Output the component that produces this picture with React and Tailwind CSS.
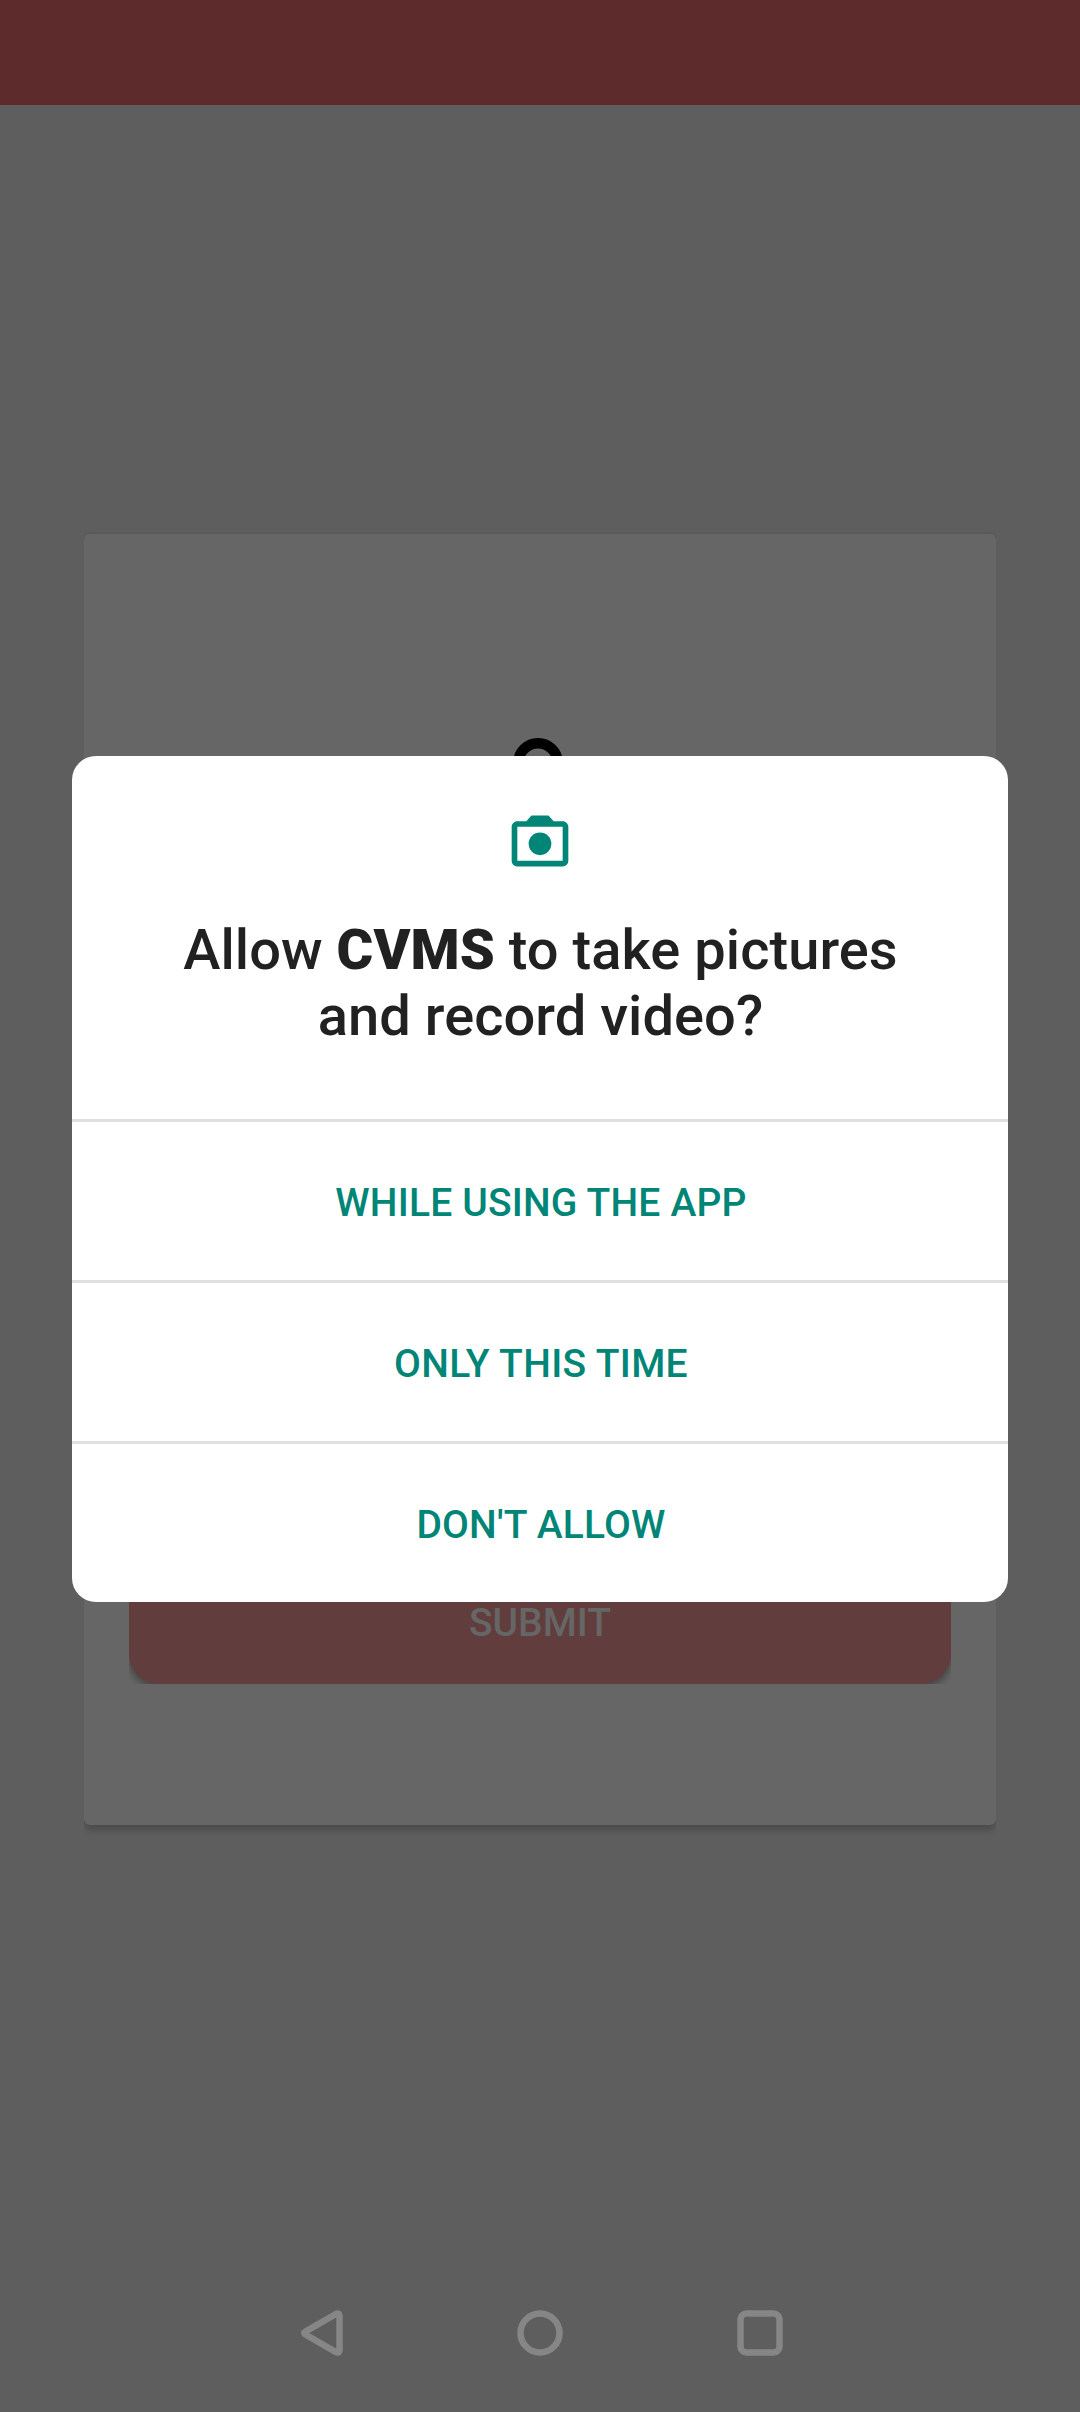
const choices = [
  { label: 'WHILE USING THE APP', tracking: 'tracking-[0.18px]' },
  { label: 'ONLY THIS TIME', tracking: 'tracking-[0.34px]' },
  { label: "DON'T ALLOW", tracking: 'tracking-[0.2px]' },
];

function CameraIcon() {
  return (
    <svg className="block size-[68px] shrink-0" viewBox="0 0 24 24" fill="#008577">
      <path fillRule="evenodd" d="M20 5h-3.17L15 3H9L7.17 5H4c-1.1 0-2 .9-2 2v12c0 1.1.9 2 2 2h16c1.1 0 2-.9 2-2V7c0-1.1-.9-2-2-2zm0 14H4V7h16z" />
      <circle cx="12" cy="13" r="4" />
    </svg>
  );
}

function LoginCard() {
  return (
    <div className="mx-[84px] mt-[429px] flex h-[1291px] flex-col items-center rounded-[6px] bg-[#666666] px-[45px] pb-[141px] pt-[204px] shadow-[0_4px_8px_rgba(0,0,0,0.25)] [clip-path:inset(-2px_0_-12px_0)]">
      <svg className="-ml-[4px] block size-[50px]" viewBox="0 0 50 50" fill="none" stroke="#000" strokeWidth="10.5">
        <circle cx="25" cy="25" r="19.75" />
      </svg>
      <div className="mt-auto flex h-[144px] w-full overflow-hidden">
        <button className="h-[144px] w-full rounded-[30px] bg-[#613d3d] pt-[23px] text-[39px] font-medium leading-none text-[#666666] shadow-[0_4px_8px_rgba(0,0,0,0.35)]">
          SUBMIT
        </button>
      </div>
    </div>
  );
}

function NavigationBar() {
  return (
    <div className="mt-auto flex h-[126px] items-start justify-center pt-[17px]">
      <svg className="block h-[60px] w-[480px] overflow-visible" viewBox="0 0 480 60" fill="none" stroke="#868686" strokeWidth="6.5" strokeLinejoin="round">
        <path d="M35.500 11.200Q39.500 9 39.500 13.500V46.500Q39.500 51 35.500 48.800L5.800 31.700Q2.800 30 5.800 28.300Z" />
        <circle cx="240" cy="30" r="19.5" />
        <rect x="440.500" y="10.500" width="39" height="39" rx="6" />
      </svg>
    </div>
  );
}

function PermissionDialog() {
  return (
    <div className="absolute left-[72px] top-[756px] flex h-[846px] w-[936px] flex-col overflow-hidden rounded-[24px] bg-white">
      <div className="flex h-[363px] flex-col items-center pt-[50.5px]">
        <CameraIcon />
        <h1 className="mt-[42px] pl-px text-center text-[56px] font-medium leading-[66px] tracking-[0.06px] text-[#212121]">
          Allow <span className="font-black">CVMS</span> to take pictures
          <br />
          and record video?
        </h1>
      </div>
      {choices.map(({ label, tracking }) => (
        <button key={label} className={`flex h-[161px] w-full items-center justify-center border-t-[3px] border-[#e0e0e0] pl-[2px] pt-[4px] text-[39px] font-medium text-[#008577] ${tracking}`}>
          {label}
        </button>
      ))}
    </div>
  );
}

export default function App() {
  return (
    <div className="relative flex h-[2412px] w-[1080px] flex-col overflow-hidden bg-[#5e5e5e] font-[Roboto,sans-serif]">
      <div className="h-[105px] shrink-0 bg-[#5d2b2b]" />
      <LoginCard />
      <NavigationBar />
      <PermissionDialog />
    </div>
  );
}
